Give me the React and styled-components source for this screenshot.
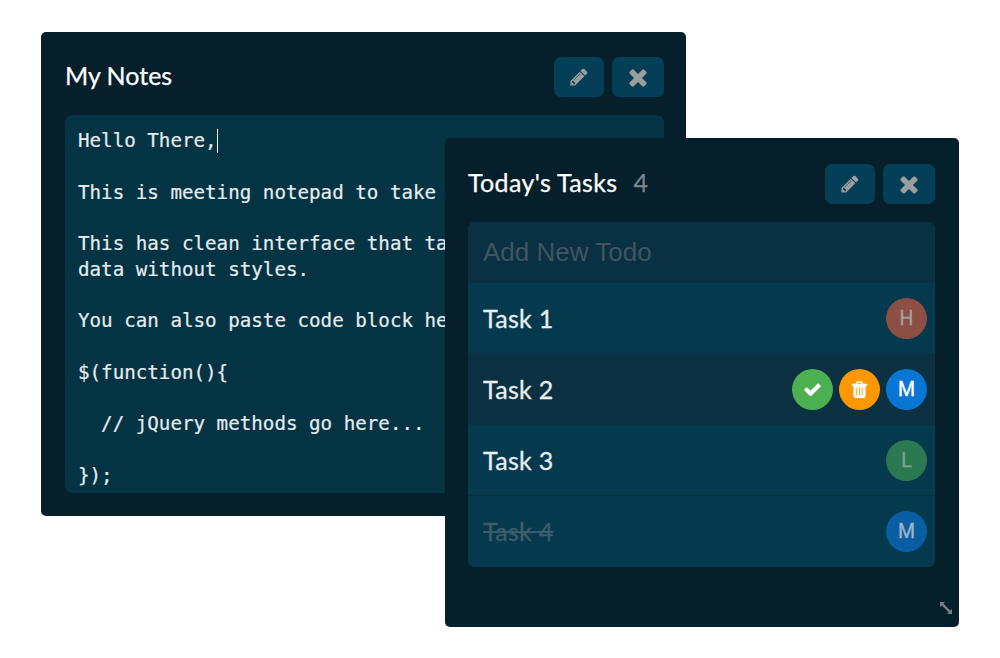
import React from "react";
import styled, { createGlobalStyle } from "styled-components";

const GlobalStyle = createGlobalStyle`
  * { box-sizing: border-box; }
  body { margin: 0; background: #fff; font-family: Lato, "Liberation Sans", sans-serif; }
`;

const Desktop = styled.main`
  position: relative;
  width: 1000px;
  height: 658px;
  overflow: hidden;
  background: #fff;
`;

const Window = styled.section`
  position: absolute;
  left: ${(p) => p.$x}px;
  top: ${(p) => p.$y}px;
  width: ${(p) => p.$w}px;
  height: ${(p) => p.$h}px;
  padding: ${(p) => p.$pad};
  display: flex;
  flex-direction: column;
  background: #051f2b;
  border-radius: 5px;
`;

const Header = styled.header`
  display: flex;
  align-items: center;
  height: 40px;
  margin-bottom: 18px;
  flex: none;
`;

const Heading = styled.div`
  flex: 1;
  display: flex;
  gap: 16px;
  font-size: 25px;
  line-height: 36px;
  height: 40px;
`;

const Title = styled.h1`
  margin: 0;
  font: inherit;
  letter-spacing: ${(p) => p.$spacing || 0}px;
  color: #fff;
  -webkit-text-stroke: 0.25px currentColor;
  white-space: pre;
`;

const Count = styled.span`
  color: #7b878e;
  -webkit-text-stroke: 0.25px currentColor;
`;

const Actions = styled.div`
  display: flex;
  gap: 8px;
`;

const IconButton = styled.button`
  width: ${(p) => p.$w}px;
  height: 40px;
  padding: 0;
  border: 0;
  border-radius: 7px;
  display: grid;
  place-items: center;
  background: #053f57;
  color: #9c9d9e;
`;

const Notepad = styled.div`
  height: 378px;
  padding: 13px 13px 0;
  border-radius: 7px;
  overflow: hidden;
  background: #043344;
  color: #e6edf0;
  font-family: "DejaVu Sans Mono", monospace;
  font-size: 19.2px;
  line-height: 25.75px;
  -webkit-text-stroke: 0.2px currentColor;
`;

const NoteLine = styled.div`
  height: 25.75px;
  white-space: pre;
`;

const Caret = styled.span`
  display: inline-block;
  width: 1px;
  height: 24px;
  vertical-align: -6px;
  background: #fff;
`;

const List = styled.div`
  width: 467px;
  border-radius: 7px;
  overflow: hidden;
  background: #053a4e;
`;

const NewTodo = styled.div`
  height: 61px;
  padding: 0 15px;
  line-height: 60px;
  background: #0a3143;
  color: #415462;
  font-family: "Liberation Sans", Arial, sans-serif;
  font-size: 26px;
`;

const Row = styled.div`
  height: ${(p) => p.$h}px;
  padding: 0 8px 0 15px;
  display: flex;
  align-items: center;
  gap: 6px;
  background: ${(p) => (p.$active ? "#0a3042" : "#053a4e")};
  border-top: 1px solid ${(p) => p.$line || "transparent"};
`;

const Label = styled.span`
  margin-right: auto;
  padding-bottom: 2px;
  font-size: 25px;
  letter-spacing: 0.3px;
  -webkit-text-stroke: 0.3px currentColor;
  color: ${(p) => (p.$done ? "#3d5b6b" : "#e8eef1")};
  text-decoration: ${(p) => (p.$done ? "line-through" : "none")};
`;

const Circle = styled.span`
  width: 41px;
  height: 41px;
  border-radius: 50%;
  display: grid;
  place-items: center;
  font-family: Roboto, sans-serif;
  font-size: 19.5px;
  -webkit-text-stroke: 0.35px currentColor;
  background: ${(p) => p.$bg};
  color: ${(p) => p.$fg || "#fff"};
`;

const ResizeGrip = styled.span`
  position: absolute;
  right: 6px;
  bottom: 12px;
  width: 14px;
  height: 14px;
  display: flex;
  color: #777e82;
`;

const ICONS = {
  pencil:
    "M491 1536l91-91-235-235-91 91v107h128v128h107zm523-928q0-22-22-22-10 0-17 7l-542 542q-7 7-7 17 0 22 22 22 10 0 17-7l542-542q7-7 7-17zm-54-192l416 416-832 832h-416v-416zm683 96q0 53-37 90l-166 166-416-416 166-165q36-38 90-38 53 0 91 38l235 234q37 39 37 91z",
  close:
    "M1490 1322q0 40-28 68l-136 136q-28 28-68 28t-68-28l-294-294-294 294q-28 28-68 28t-68-28l-136-136q-28-28-28-68t28-68l294-294-294-294q-28-28-28-68t28-68l136-136q28-28 68-28t68 28l294 294 294-294q28-28 68-28t68 28l136 136q28 28 28 68t-28 68l-294 294 294 294q28 28 28 68z",
  check:
    "M1671 566q0 40-28 68l-724 724-136 136q-28 28-68 28t-68-28l-136-136-362-362q-28-28-28-68t28-68l136-136q28-28 68-28t68 28l294 295 656-657q28-28 68-28t68 28l136 136q28 28 28 68z",
};

function Icon({ name, size }) {
  return (
    <svg width={size} height={size} viewBox="0 0 1792 1792" fill="currentColor" aria-hidden="true">
      <path d={ICONS[name]} />
    </svg>
  );
}

function TrashIcon() {
  return (
    <svg width="17" height="18" viewBox="0 0 17 18" fill="none" aria-hidden="true">
      <path d="M5.6 3V2.2Q5.6 1 6.8 1h3.4q1.2 0 1.2 1.2V3" stroke="#fff" strokeWidth="1.5" />
      <rect x="0.8" y="2.7" width="15.4" height="2.2" rx="0.7" fill="#fff" />
      <path d="M2.4 4.5h12.2v10.2q0 2.3-2.2 2.3H4.6q-2.2 0-2.2-2.3z" fill="#fff" />
      <path d="M5.8 6.5v8M8.5 6.5v8M11.2 6.5v8" stroke="#ff9800" strokeWidth="0.9" />
    </svg>
  );
}

function WindowActions() {
  return (
    <Actions>
      <IconButton $w={50} aria-label="Edit">
        <Icon name="pencil" size={20} />
      </IconButton>
      <IconButton $w={52} aria-label="Close">
        <Icon name="close" size={26} />
      </IconButton>
    </Actions>
  );
}

const NOTE_LINES = [
  "Hello There,",
  "",
  "This is meeting notepad to take",
  "",
  "This has clean interface that ta",
  "data without styles.",
  "",
  "You can also paste code block he",
  "",
  "$(function(){",
  "",
  "  // jQuery methods go here...",
  "",
  "});",
];

const TASKS = [
  { name: "Task 1", badge: "H", bg: "#8d4e43", fg: "#a3a2a2", h: 70 },
  { name: "Task 2", badge: "M", bg: "#0975d5", fg: "#fff", h: 72, active: true },
  { name: "Task 3", badge: "L", bg: "#2b7950", fg: "#7fa195", h: 70 },
  { name: "Task 4", badge: "M", bg: "#095ea3", fg: "#a3b4c5", h: 72, done: true, line: "#06303f" },
];

export default function App() {
  return (
    <>
      <GlobalStyle />
      <Desktop>
        <Window $x={41} $y={32} $w={645} $h={484} $pad="25px 22px 23px 24px">
          <Header>
            <Heading>
              <Title>My Notes</Title>
            </Heading>
            <WindowActions />
          </Header>
          <Notepad>
            {NOTE_LINES.map((line, i) => (
              <NoteLine key={i}>
                {line}
                {i === 0 && <Caret />}
              </NoteLine>
            ))}
          </Notepad>
        </Window>
        <Window $x={445} $y={138} $w={514} $h={489} $pad="26px 24px 0 23px">
          <Header>
            <Heading>
              <Title $spacing={0.35}>Today's Tasks</Title>
              <Count>4</Count>
            </Heading>
            <WindowActions />
          </Header>
          <List>
            <NewTodo>Add New Todo</NewTodo>
            {TASKS.map((t) => (
              <Row key={t.name} $h={t.h} $active={t.active} $line={t.line}>
                <Label $done={t.done}>{t.name}</Label>
                {t.active && (
                  <>
                    <Circle $bg="#4caf50">
                      <Icon name="check" size={19} />
                    </Circle>
                    <Circle $bg="#ff9800">
                      <TrashIcon />
                    </Circle>
                  </>
                )}
                <Circle $bg={t.bg} $fg={t.fg}>
                  {t.badge}
                </Circle>
              </Row>
            ))}
          </List>
          <ResizeGrip>
            <svg width="14" height="14" viewBox="0 0 14 14" fill="currentColor" aria-hidden="true">
              <path d="M1 1h5L4.5 2.7l6.8 6.8L13 8v5H8l1.6-1.7-6.8-6.8L1 6z" />
            </svg>
          </ResizeGrip>
        </Window>
      </Desktop>
    </>
  );
}
